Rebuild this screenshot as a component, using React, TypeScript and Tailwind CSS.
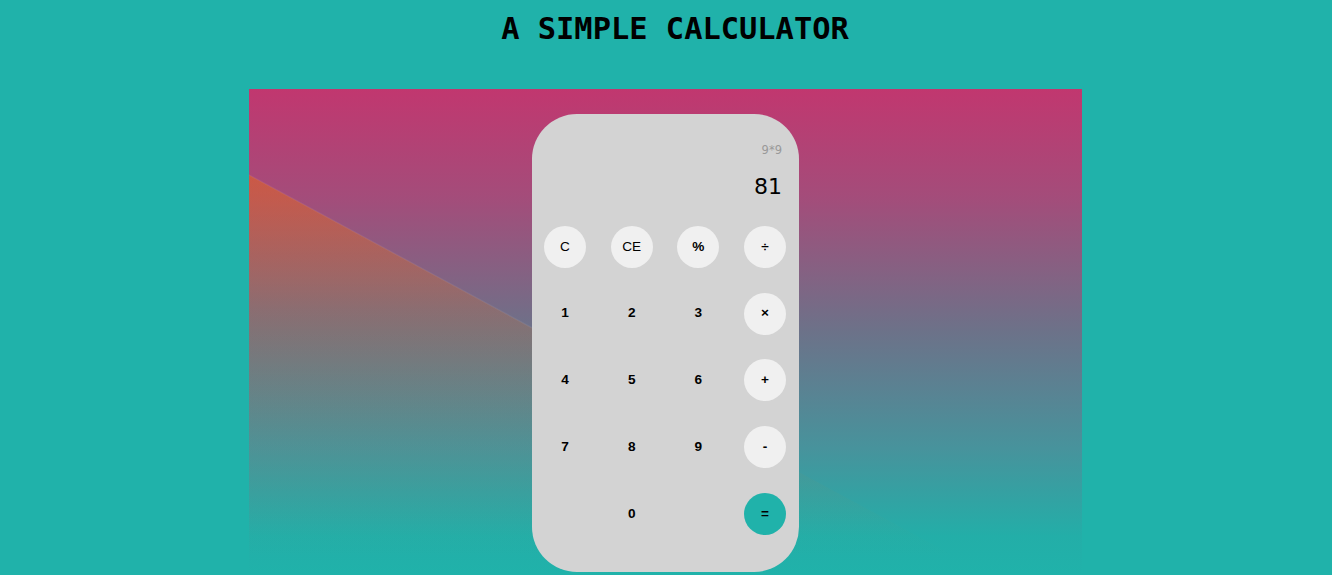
import React from 'react';

const rows: { label: string; kind: 'op' | 'digit' | 'eq' | 'blank'; bold?: boolean }[][] = [
  [
    { label: 'C', kind: 'op' },
    { label: 'CE', kind: 'op' },
    { label: '%', kind: 'op', bold: true },
    { label: '÷', kind: 'op', bold: true },
  ],
  [
    { label: '1', kind: 'digit' },
    { label: '2', kind: 'digit' },
    { label: '3', kind: 'digit' },
    { label: '×', kind: 'op', bold: true },
  ],
  [
    { label: '4', kind: 'digit' },
    { label: '5', kind: 'digit' },
    { label: '6', kind: 'digit' },
    { label: '+', kind: 'op', bold: true },
  ],
  [
    { label: '7', kind: 'digit' },
    { label: '8', kind: 'digit' },
    { label: '9', kind: 'digit' },
    { label: '-', kind: 'op', bold: true },
  ],
  [
    { label: '', kind: 'blank' },
    { label: '0', kind: 'digit' },
    { label: '', kind: 'blank' },
    { label: '=', kind: 'eq', bold: true },
  ],
];

const Wallpaper: React.FC = () => (
  <svg
    className="absolute inset-0 h-full w-full"
    viewBox="0 0 833 486"
    preserveAspectRatio="none"
  >
    <defs>
      <linearGradient id="base" x1="0" y1="0" x2="0" y2="486" gradientUnits="userSpaceOnUse">
        <stop offset="0" stopColor="#c1376f" />
        <stop offset="0.22" stopColor="#a44c7a" />
        <stop offset="0.5" stopColor="#6c7289" />
        <stop offset="0.74" stopColor="#47939c" />
        <stop offset="0.92" stopColor="#23aea8" />
        <stop offset="1" stopColor="#20b2aa" />
      </linearGradient>
      <linearGradient id="tri" x1="0" y1="86" x2="0" y2="470" gradientUnits="userSpaceOnUse">
        <stop offset="0" stopColor="#ec6a14" stopOpacity="0.5" />
        <stop offset="0.35" stopColor="#e2741c" stopOpacity="0.2" />
        <stop offset="0.7" stopColor="#c8842c" stopOpacity="0.06" />
        <stop offset="1" stopColor="#c8842c" stopOpacity="0" />
      </linearGradient>
    </defs>
    <rect width="833" height="486" fill="url(#base)" />
    <polygon points="0,86 833,536 0,536" fill="url(#tri)" />
    <line x1="0" y1="86" x2="300" y2="248" stroke="#ffffff" strokeOpacity="0.06" strokeWidth="1.5" />
  </svg>
);

export default function App() {
  return (
    <div className="min-h-[575px] overflow-hidden bg-[#20b2aa]">
      <h1 className="pt-[11px] pl-[18px] text-center font-['DejaVu_Sans_Mono',monospace] text-[30.4px] font-bold leading-[36px] text-black">
        A SIMPLE CALCULATOR
      </h1>

      <div className="relative mt-[42px] ml-[249px] h-[486px] w-[833px] pt-[25px]">
        <Wallpaper />

        <div className="relative mx-auto flex h-[458px] w-[267px] flex-col rounded-[45px] bg-[#d3d3d3] pt-[29px] pr-[13px] pl-[12px]">
          <div className="pr-[4px] text-right font-['DejaVu_Sans',sans-serif]">
            <div className="text-[11.5px] leading-[14px] text-[#999999]">9*9</div>
            <div className="mt-[17px] text-[22px] leading-[26px] text-black">81</div>
          </div>

          <div className="mt-[26px] flex flex-col gap-[24.7px]">
            {rows.map((row, i) => (
              <div key={i} className="flex justify-between">
                {row.map((b, j) => (
                  <button
                    key={j}
                    className={
                      "flex h-[42px] w-[42px] items-center justify-center rounded-full font-['Liberation_Sans',Arial,sans-serif] text-[13.6px] text-black " +
                      (b.kind === 'op'
                        ? 'bg-[#f0f0f0] '
                        : b.kind === 'eq'
                          ? 'bg-[#20b2aa] '
                          : 'bg-transparent ') +
                      (b.kind === 'digit' || b.bold ? 'font-bold' : 'font-normal')
                    }
                  >
                    {b.label}
                  </button>
                ))}
              </div>
            ))}
          </div>
        </div>
      </div>
    </div>
  );
}
